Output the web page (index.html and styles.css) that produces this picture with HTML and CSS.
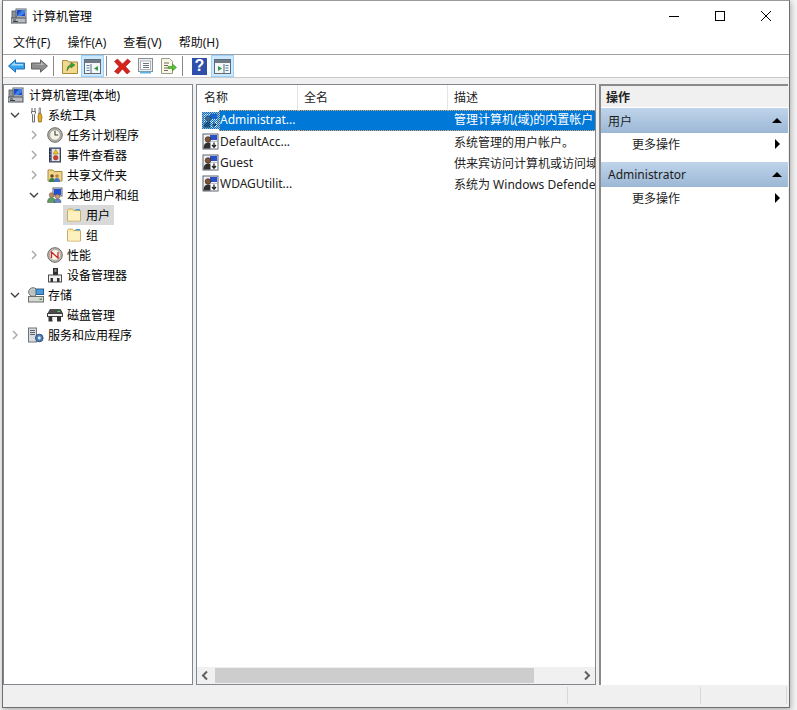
FILE: index.html
```html
<!DOCTYPE html>
<html lang="zh-CN">
  <head>
    <meta charset="UTF-8" />
    <title>计算机管理</title>
    <link rel="stylesheet" href="styles.css">
  </head>
  <body>
    <!-- Shared icon set -->
    <svg class="defs" width="0" height="0">
      <symbol id="i-computer" viewBox="0 0 16 16">
        <rect x="5" y="1" width="10" height="8" fill="#e4e8ee" stroke="#5a6472"/>
        <rect x="6" y="2" width="8" height="6" fill="#1d49c9"/>
        <path d="M6 8l5-6h3v3l-4 3z" fill="#3f7fe8"/>
        <rect x="1" y="3" width="4" height="8" fill="#8d949c" stroke="#4d545c" stroke-width=".8"/>
        <rect x="0" y="10" width="15" height="5" fill="#b9bdc2" stroke="#4f555c"/>
        <path d="M2 12h3M2 13.5h5" stroke="#3b4046"/>
      </symbol>
      <symbol id="i-tools" viewBox="0 0 16 16">
        <path d="M4 1v4M7 1v4" stroke="#8c8c8c" stroke-width="1.4"/>
        <path d="M3.5 4.5h4v2l-1 1V15h-2V7.500l-1-1z" fill="#f2f2f2" stroke="#6f6f6f"/>
        <path d="M11 1h1.500v5H11z" fill="#d9d9d9" stroke="#6f6f6f" stroke-width=".7"/>
        <path d="M10.500 6.500h2.500L14 10l-.8 5h-2.600L10 10z" fill="#e8ac1c" stroke="#7d5c10" stroke-width=".7"/>
      </symbol>
      <symbol id="i-clock" viewBox="0 0 16 16">
        <circle cx="8" cy="8" r="7.300" fill="#b5b5ad" stroke="#6d6d66"/>
        <circle cx="8" cy="8" r="5.300" fill="#f6f3e6" stroke="#8b8b84" stroke-width=".7"/>
        <path d="M8 3.800V8h3.200" fill="none" stroke="#3d3d3d" stroke-width="1.100"/>
      </symbol>
      <symbol id="i-log" viewBox="0 0 16 16">
        <rect x="2.500" y="1" width="11" height="14" fill="#6d7fa6" stroke="#38415a"/>
        <rect x="5" y="2" width="7.500" height="12" fill="#e9e6dc"/>
        <path d="M2 3h2M2 6h2M2 9h2M2 12h2" stroke="#1d2030"/>
        <path d="M8.700 2.500l2.600 4.500H6.100z" fill="#f4c31f" stroke="#8a6b10" stroke-width=".5"/>
        <circle cx="8.700" cy="10.700" r="2.300" fill="#cf4030" stroke="#7c2018" stroke-width=".5"/>
      </symbol>
      <symbol id="i-share" viewBox="0 0 16 16">
        <path d="M1 3h5l1 1.500h8V14H1z" fill="#f1d689" stroke="#a8893a"/>
        <circle cx="5" cy="9" r="1.800" fill="#6b4a2a"/>
        <path d="M2 15c0-3 1-4 3-4s3 1 3 4z" fill="#3c7f4a"/>
        <circle cx="10" cy="9" r="1.800" fill="#b57e55"/>
        <path d="M7 15c0-3 1-4 3-4s3 1 3 4z" fill="#4a78c0"/>
      </symbol>
      <symbol id="i-users" viewBox="0 0 16 16">
        <rect x="6" y="1" width="9" height="8" fill="#dfe5ec" stroke="#5a6472"/>
        <rect x="7" y="2" width="7" height="6" fill="#2350cf"/>
        <circle cx="4.500" cy="8" r="2.300" fill="#b98a63" stroke="#6d4e33" stroke-width=".5"/>
        <path d="M.5 15.500c0-3.500 1.500-5 4-5s4 1.500 4 5z" fill="#5f9a62" stroke="#38603c" stroke-width=".5"/>
        <circle cx="10.500" cy="9.500" r="2.200" fill="#c79a74" stroke="#6d4e33" stroke-width=".5"/>
        <path d="M7 15.500c0-2.500 1-3.500 3.500-3.500s3.500 1 3.500 3.500z" fill="#5f86c4" stroke="#38507a" stroke-width=".5"/>
      </symbol>
      <symbol id="i-folder" viewBox="0 0 16 16">
        <path d="M1.500 3.500l1-1.500h4l1 1.500h7V14h-13z" fill="#fbe9a8" stroke="#c9ad62"/>
        <path d="M2 5h12v8.500H2z" fill="#fdf1c0"/>
        <path d="M9.500 2h4.500v1.500H9.500z" fill="#4d9de0"/>
      </symbol>
      <symbol id="i-perf" viewBox="0 0 16 16">
        <circle cx="8" cy="8" r="7.300" fill="#c5c3ba" stroke="#65645e"/>
        <circle cx="8" cy="8" r="5.400" fill="#f7f5ee" stroke="#8c8b84" stroke-width=".6"/>
        <path d="M4.500 11V5l6.500 6V5" fill="none" stroke="#c9261d" stroke-width="1.300"/>
      </symbol>
      <symbol id="i-device" viewBox="0 0 16 16">
        <rect x="6" y="1" width="5" height="7" fill="#2d2d2d"/>
        <rect x="7.500" y="2" width="2" height="3" fill="#8d8d8d"/>
        <rect x="1.500" y="8" width="13" height="7" fill="#f0f0f0" stroke="#4d4d4d"/>
        <rect x="3.500" y="11" width="2.500" height="4" fill="#333"/>
        <rect x="10" y="11" width="2.500" height="4" fill="#333"/>
      </symbol>
      <symbol id="i-storage" viewBox="0 0 16 16">
        <circle cx="5" cy="5" r="4.300" fill="#c8ccc8" stroke="#6b706b"/>
        <circle cx="5" cy="5" r="1.200" fill="#f4f4f4" stroke="#6b706b" stroke-width=".5"/>
        <rect x="8" y="2" width="7.500" height="5.500" fill="#4a9ad8" stroke="#2b5f8f"/>
        <rect x=".5" y="9.500" width="15" height="5.500" fill="#d5d7d3" stroke="#6b706b"/>
        <rect x="11.500" y="11.500" width="2.500" height="1.500" fill="#4aa04a"/>
      </symbol>
      <symbol id="i-disk" viewBox="0 0 16 16">
        <path d="M3 2.500h10.500l2 4H1z" fill="#4a4a4a" stroke="#2b2b2b" stroke-width=".7"/>
        <rect x="10.500" y="3.800" width="2.500" height="1.200" fill="#58d058"/>
        <rect x=".5" y="6.500" width="15" height="3" fill="#efefef" stroke="#3d3d3d"/>
        <rect x="1.500" y="9.500" width="4" height="5" fill="#333"/>
        <rect x="10" y="9.500" width="4" height="5" fill="#333"/>
        <path d="M5.500 10h4.500v3H5.500z" fill="#f5f5f5"/>
      </symbol>
      <symbol id="i-services" viewBox="0 0 16 16">
        <rect x=".5" y="1" width="8" height="14" fill="#d9dce0" stroke="#6f757c"/>
        <path d="M2 3.500h5M2 5.500h5M2 7.500h5" stroke="#5c6268"/>
        <circle cx="11.300" cy="11" r="3.800" fill="#4f80ba" stroke="#2d4f7a"/>
        <circle cx="11.300" cy="11" r="1.400" fill="#e6eef7"/>
      </symbol>
      <symbol id="i-user" viewBox="0 0 17 17">
        <rect x="1" y="1" width="15" height="15" fill="#eef0f3" stroke="#5d6470"/>
        <path d="M8 2h7v5H8z" fill="#2b50c8"/>
        <circle cx="6" cy="6.500" r="2.800" fill="#7c5335" stroke="#2b1d12" stroke-width=".6"/>
        <path d="M1.500 15.500c0-4 1.500-6 4.500-6s4 2 4 6z" fill="#2f2f2f"/>
        <rect x="8.500" y="8.500" width="7" height="7" fill="#fff" stroke="#9aa0a8" stroke-width=".6"/>
        <path d="M12 9.500v4.500M10 12l2 2.200 2-2.200" fill="none" stroke="#222" stroke-width="1.300"/>
      </symbol>
      <pattern id="dots" width="2" height="2" patternUnits="userSpaceOnUse">
        <rect width="1" height="1" fill="#0078d7"/>
        <rect x="1" y="1" width="1" height="1" fill="#0078d7"/>
      </pattern>
      <symbol id="c-right" viewBox="0 0 14 10">
        <path d="M5 1l4 4-4 4" fill="none" stroke="#a6a6a6" stroke-width="1.400"/>
      </symbol>
      <symbol id="c-down" viewBox="0 0 14 10">
        <path d="M3 3l4 4 4-4" fill="none" stroke="#404040" stroke-width="1.400"/>
      </symbol>
    </svg>

    <div class="window">
      <div class="titlebar">
        <svg class="title-ico"><use href="#i-computer"/></svg>
        <span class="title-text">计算机管理</span>
        <div class="caption">
          <span class="cap-btn"><svg width="12" height="12"><path d="M1 6.500h10" stroke="#000"/></svg></span>
          <span class="cap-btn"><svg width="12" height="12"><rect x="1.500" y="1.500" width="9" height="9" fill="none" stroke="#000"/></svg></span>
          <span class="cap-btn"><svg width="12" height="12"><path d="M1 1l10 10M11 1L1 11" stroke="#000" fill="none"/></svg></span>
        </div>
      </div>

      <div class="menubar">
        <span class="menu">文件(F)</span>
        <span class="menu">操作(A)</span>
        <span class="menu">查看(V)</span>
        <span class="menu">帮助(H)</span>
      </div>

      <div class="toolbar">
        <span class="tool">
          <svg width="17" height="14" viewBox="0 0 17 14"><path d="M.5 7L7.500.8v3.200h9v6h-9v3.200z" fill="#38a4ee" stroke="#1c6fb5"/><path d="M3 6.500l4-3.500v2h8v1.500z" fill="#a8dcfa"/></svg>
        </span>
        <span class="tool">
          <svg width="17" height="14" viewBox="0 0 17 14"><path d="M16.500 7L9.500.8v3.200h-9v6h9v3.200z" fill="#8e8e8e" stroke="#626262"/><path d="M2 5h8V3l3 3z" fill="#c4c4c4"/></svg>
        </span>
        <span class="sep"></span>
        <span class="tool">
          <svg width="16" height="16" viewBox="0 0 16 16"><path d="M.5 2.500h5l1 1.500h9v11.500H.5z" fill="#f3d98f" stroke="#a68a3c"/><path d="M5 13c0-4 1.500-6 4-6.500V4.500L13 7l-4 3V8.500c-1.500.5-3 2-4 4.500z" fill="#3e9c34" stroke="#2b7325" stroke-width=".5"/></svg>
        </span>
        <span class="tool on">
          <svg width="17" height="15" viewBox="0 0 17 15"><rect x=".5" y=".5" width="16" height="14" fill="#f4f6f8" stroke="#5f6b75"/><rect x="1" y="1" width="15" height="3" fill="#6e7a86"/><path d="M7 5v9" stroke="#5f6b75"/><path d="M2.500 6.500h3M2.500 9h3M2.500 11.500h3" stroke="#4d7fb0"/><path d="M14 7v5l-4-2.500z" fill="#2f9a45"/></svg>
        </span>
        <span class="sep"></span>
        <span class="tool">
          <svg width="17" height="17" viewBox="0 0 17 17"><path d="M3.500 1L8.500 6l5-5 3 2.500-5 5 4.500 5-3 2.500-4.500-5-4.500 5L.5 13.500l4.500-5-4.500-5z" fill="#d6231c" stroke="#a31812" stroke-width=".6"/></svg>
        </span>
        <span class="tool">
          <svg width="15" height="16" viewBox="0 0 15 16"><rect x=".5" y=".5" width="14" height="13" fill="#eceeef" stroke="#8a8f95"/><rect x="2.500" y="3" width="10" height="8.500" fill="#fff" stroke="#b0b5ba"/><path d="M5 5.500h6M5 7.500h6M5 9.500h6" stroke="#6a7580"/><path d="M2 14.500h11" stroke="#62b0e0" stroke-width="2"/></svg>
        </span>
        <span class="tool">
          <svg width="16" height="16" viewBox="0 0 16 16"><path d="M.5.500h8l3 3V15.500H.5z" fill="#faf6e4" stroke="#9a9a8e"/><path d="M3 5h5M3 7.500h4M3 10h4M3 12.500h4" stroke="#6d6d66"/><path d="M7 8.500h4.500V6l4 3.500-4 3.500v-2.500H7z" fill="#5cc13b" stroke="#3a8a24" stroke-width=".6"/></svg>
        </span>
        <span class="sep sep-wide"></span>
        <span class="tool"><span class="help">?</span></span>
        <span class="tool on">
          <svg width="17" height="15" viewBox="0 0 17 15"><rect x=".5" y=".5" width="16" height="14" fill="#f4f6f8" stroke="#5f6b75"/><rect x="1" y="1" width="15" height="3" fill="#6e7a86"/><path d="M10 5v9" stroke="#5f6b75"/><path d="M11.500 6.500h3M11.500 9h3M11.500 11.500h3" stroke="#4d7fb0"/><path d="M4 7v5l4-2.500z" fill="#2f9a45"/></svg>
        </span>
      </div>

      <div class="panes">
        <!-- Console tree -->
        <div class="tree">
          <div class="node lv0"><span class="lbl"><svg class="ico"><use href="#i-computer"/></svg>计算机管理(本地)</span></div>
          <div class="node lv1"><svg class="twist"><use href="#c-down"/></svg><span class="lbl"><svg class="ico"><use href="#i-tools"/></svg>系统工具</span></div>
          <div class="node lv2"><svg class="twist"><use href="#c-right"/></svg><span class="lbl"><svg class="ico"><use href="#i-clock"/></svg>任务计划程序</span></div>
          <div class="node lv2"><svg class="twist"><use href="#c-right"/></svg><span class="lbl"><svg class="ico"><use href="#i-log"/></svg>事件查看器</span></div>
          <div class="node lv2"><svg class="twist"><use href="#c-right"/></svg><span class="lbl"><svg class="ico"><use href="#i-share"/></svg>共享文件夹</span></div>
          <div class="node lv2"><svg class="twist"><use href="#c-down"/></svg><span class="lbl"><svg class="ico"><use href="#i-users"/></svg>本地用户和组</span></div>
          <div class="node lv3"><span class="twist"></span><span class="lbl picked"><svg class="ico"><use href="#i-folder"/></svg>用户</span></div>
          <div class="node lv3"><span class="twist"></span><span class="lbl"><svg class="ico"><use href="#i-folder"/></svg>组</span></div>
          <div class="node lv2"><svg class="twist"><use href="#c-right"/></svg><span class="lbl"><svg class="ico"><use href="#i-perf"/></svg>性能</span></div>
          <div class="node lv2"><span class="twist"></span><span class="lbl"><svg class="ico"><use href="#i-device"/></svg>设备管理器</span></div>
          <div class="node lv1"><svg class="twist"><use href="#c-down"/></svg><span class="lbl"><svg class="ico"><use href="#i-storage"/></svg>存储</span></div>
          <div class="node lv2"><span class="twist"></span><span class="lbl"><svg class="ico"><use href="#i-disk"/></svg>磁盘管理</span></div>
          <div class="node lv1"><svg class="twist"><use href="#c-right"/></svg><span class="lbl"><svg class="ico"><use href="#i-services"/></svg>服务和应用程序</span></div>
        </div>

        <!-- User list -->
        <div class="list">
          <div class="list-head">
            <span class="col-name">名称</span>
            <span class="col-full">全名</span>
            <span class="col-desc">描述</span>
          </div>
          <div class="rows">
            <div class="row selected">
              <svg class="user-ico" viewBox="0 0 17 17"><use href="#i-user" width="17" height="17"/><rect width="17" height="17" fill="url(#dots)"/></svg>
              <span class="cell-name">Administrat...</span>
              <span class="cell-full"></span>
              <span class="cell-desc">管理计算机(域)的内置帐户</span>
            </div>
            <div class="row">
              <svg class="user-ico"><use href="#i-user"/></svg>
              <span class="cell-name">DefaultAcc...</span>
              <span class="cell-full"></span>
              <span class="cell-desc">系统管理的用户帐户。</span>
            </div>
            <div class="row">
              <svg class="user-ico"><use href="#i-user"/></svg>
              <span class="cell-name">Guest</span>
              <span class="cell-full"></span>
              <span class="cell-desc">供来宾访问计算机或访问域</span>
            </div>
            <div class="row">
              <svg class="user-ico"><use href="#i-user"/></svg>
              <span class="cell-name">WDAGUtilit...</span>
              <span class="cell-full"></span>
              <span class="cell-desc">系统为 Windows Defender</span>
            </div>
          </div>
          <div class="hscroll">
            <svg class="arrow" width="16" height="15" viewBox="0 0 16 15"><path d="M10 3.500L6 7.500l4 4" fill="none" stroke="#606060" stroke-width="2"/></svg>
            <div class="track"><div class="thumb"></div></div>
            <svg class="arrow" width="16" height="15" viewBox="0 0 16 15"><path d="M6 3.500l4 4-4 4" fill="none" stroke="#606060" stroke-width="2"/></svg>
          </div>
        </div>

        <!-- Actions pane -->
        <div class="actions">
          <div class="act-title">操作</div>
          <div class="act-head"><span>用户</span><i class="tri-up"></i></div>
          <div class="act-item"><span>更多操作</span><i class="tri-right"></i></div>
          <div class="act-head act-second"><span>Administrator</span><i class="tri-up"></i></div>
          <div class="act-item"><span>更多操作</span><i class="tri-right"></i></div>
        </div>
      </div>

      <div class="statusbar">
        <span class="st st-main"></span>
        <span class="st st-mid"></span>
        <span class="st st-end"></span>
      </div>
    </div>
  </body>
</html>
```

FILE: styles.css
```css
/* Base */
* {
  box-sizing: border-box;
  margin: 0;
  padding: 0;
}

html,
body {
  height: 100%;
}

body {
  background-color: #f4f4f4;
  color: #000;
  font-family: "Noto Sans", "Noto Sans CJK SC", sans-serif;
  font-size: 12px;
  overflow: hidden;
}

.defs {
  position: absolute;
}

/* Window frame */
.window {
  width: 788px;
  height: 708px;
  margin-left: 2px;
  display: flex;
  flex-direction: column;
  background-color: #f0f0f0;
  border: 1px solid #6f6f6f;
  border-top-color: #9a9a9a;
  box-shadow: 1px 2px 6px rgba(0, 0, 0, 0.3);
}

.titlebar {
  height: 29px;
  display: flex;
  align-items: center;
  padding-left: 8px;
  background-color: #fff;
}

.title-ico {
  width: 16px;
  height: 16px;
  margin-right: 5px;
}

.title-text {
  font-size: 12px;
}

.caption {
  display: flex;
  margin-left: auto;
}

.cap-btn {
  width: 46px;
  height: 29px;
  display: flex;
  align-items: center;
  justify-content: center;
}

/* Menu */
.menubar {
  height: 25px;
  display: flex;
  align-items: center;
  padding-left: 3px;
  background-color: #fff;
  border-bottom: 1px solid #a0a0a0;
}

.menu {
  padding: 0 7px;
  margin-right: 3px;
  color: #111;
}

/* Toolbar */
.toolbar {
  height: 23px;
  display: flex;
  align-items: center;
  padding-left: 2px;
  background-color: #fff;
  border-bottom: 1px solid #c8c8c8;
}

.tool {
  width: 23px;
  height: 22px;
  display: flex;
  align-items: center;
  justify-content: center;
}

.tool.on {
  background-color: #cce8ff;
  border: 1px solid #99d1ff;
}

.sep {
  width: 1px;
  height: 20px;
  margin: 0 4px 0 2px;
  background-color: #8a8a8a;
}

.sep-wide {
  margin-right: 5px;
}

.help {
  width: 15px;
  height: 17px;
  display: flex;
  align-items: center;
  justify-content: center;
  background-color: #2f4fa8;
  color: #fff;
  font-family: "Liberation Sans", sans-serif;
  font-size: 16px;
  font-weight: bold;
}

/* Three panes */
.panes {
  flex: 1;
  min-height: 0;
  display: flex;
  gap: 3px;
  padding-top: 6px;
}

.tree,
.list,
.actions {
  background-color: #fff;
  border: 1px solid #82878d;
}

/* Tree */
.tree {
  width: 190px;
}

.node {
  height: 20px;
  display: flex;
  align-items: center;
  white-space: nowrap;
}

.lv1 {
  padding-left: 4px;
}

.lv2 {
  padding-left: 23px;
}

.lv3 {
  padding-left: 42px;
}

.twist {
  width: 14px;
  height: 10px;
  flex-shrink: 0;
}

.lbl {
  height: 20px;
  display: flex;
  align-items: center;
  gap: 4px;
  margin-left: 3px;
  padding: 0 4px 0 3px;
}

.lv0 .lbl {
  gap: 5px;
  margin-left: 1px;
}

.lbl.picked {
  background-color: #d9d9d9;
}

.ico {
  width: 16px;
  height: 16px;
  flex-shrink: 0;
}

/* User list */
.list {
  width: 400px;
  display: flex;
  flex-direction: column;
  overflow: hidden;
}

.list-head {
  height: 25px;
  display: flex;
  align-items: center;
  flex-shrink: 0;
  color: #222;
}

.list-head span {
  height: 100%;
  display: flex;
  align-items: center;
  padding-left: 7px;
  padding-bottom: 2px;
  border-right: 1px solid #e5e5e5;
}

.col-name {
  width: 101px;
}

.col-full {
  width: 150px;
  padding-left: 6px !important;
}

.col-desc {
  flex: 1;
  padding-left: 6px !important;
  border-right: 0 !important;
}

.rows {
  flex: 1;
}

.row {
  height: 21px;
  display: flex;
  align-items: center;
  padding-left: 5px;
  white-space: nowrap;
  color: #222;
}

.user-ico {
  width: 17px;
  height: 17px;
  flex-shrink: 0;
}

.cell-name {
  width: 79px;
  padding-left: 1px;
  flex-shrink: 0;
}

.cell-full {
  width: 150px;
  flex-shrink: 0;
}

.cell-desc {
  flex: 1;
  padding-left: 6px;
  overflow: hidden;
}

.row.selected {
  color: #fff;
}

.row.selected .cell-name,
.row.selected .cell-full,
.row.selected .cell-desc {
  height: 21px;
  line-height: 18px;
  background-color: #0078d7;
  border-top: 1px dotted #f0a860;
  border-bottom: 1px dotted #f0a860;
}

.row.selected .cell-name {
  padding-left: 0;
  border-left: 1px dotted #f0a860;
}

/* Horizontal scrollbar */
.hscroll {
  height: 17px;
  display: flex;
  align-items: center;
  flex-shrink: 0;
  background-color: #f0f0f0;
}

.arrow {
  flex-shrink: 0;
}

.track {
  flex: 1;
  height: 15px;
  padding-left: 2px;
}

.thumb {
  width: 319px;
  height: 100%;
  background-color: #cdcdcd;
}

/* Actions pane */
.actions {
  flex: 1;
  margin-right: 1px;
  border-width: 2px 0 0 2px;
  border-color: #8a8a8a;
}

.act-title {
  height: 21px;
  display: flex;
  align-items: center;
  padding-left: 5px;
  margin-bottom: 1px;
  background-color: #f0f0f0;
  font-weight: bold;
  color: #222;
}

.act-head {
  height: 25px;
  display: flex;
  align-items: center;
  justify-content: space-between;
  padding: 0 6px 0 7px;
  background: linear-gradient(#bfd4ea, #9cb7d5);
  color: #1c1c1c;
}

.act-second {
  margin-top: 7px;
}

.act-item {
  height: 22px;
  display: flex;
  align-items: center;
  justify-content: space-between;
  padding: 0 6px 0 31px;
  color: #222;
}

.tri-up {
  border-left: 5px solid transparent;
  border-right: 5px solid transparent;
  border-bottom: 5px solid #000;
}

.tri-right {
  margin-right: 2px;
  border-top: 5px solid transparent;
  border-bottom: 5px solid transparent;
  border-left: 5px solid #000;
}

/* Status bar */
.statusbar {
  height: 22px;
  display: flex;
  flex-shrink: 0;
  padding: 2px 2px 3px 0;
}

.st {
  height: 100%;
  border-right: 1px solid #d8d8d8;
}

.st-main {
  width: 565px;
}

.st-mid {
  width: 133px;
}

.st-end {
  flex: 1;
}
```
